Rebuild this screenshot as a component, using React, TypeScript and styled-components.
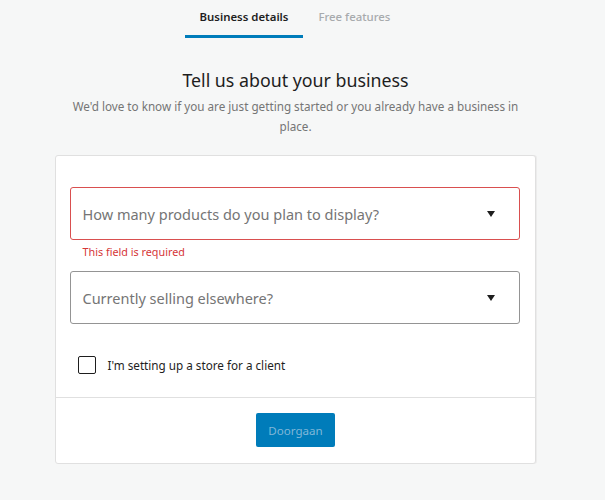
import React from "react"
import styled, { createGlobalStyle } from "styled-components"

const GlobalStyle = createGlobalStyle`
  body {
    margin: 0;
    background: #f6f7f7;
    font-family: "Noto Sans", "Open Sans", sans-serif;
    color: #1e1e1e;
  }
`

const Page = styled.div`
  width: 605px;
  display: flex;
  flex-direction: column;
  align-items: center;
`

const Tabs = styled.nav`
  display: flex;
  justify-content: center;
  margin-left: -15px;
`

const Tab = styled.div<{ $active?: boolean }>`
  padding: 9px 15px 0;
  height: 26px;
  font-size: 11.4px;
  font-weight: ${(p) => (p.$active ? 600 : 500)};
  color: ${(p) => (p.$active ? "#1e1e1e" : "#a7aaad")};
  border-bottom: 3px solid ${(p) => (p.$active ? "#007cba" : "transparent")};
  white-space: nowrap;
`

const Header = styled.header`
  margin-top: 29px;
  margin-left: -14px;
  text-align: center;
  width: 470px;
`

const Title = styled.h1`
  margin: 0;
  font-size: 17.8px;
  font-weight: 400;
  line-height: 26px;
  color: #1e1e1e;
`

const Subtitle = styled.p`
  margin: 3px 0 0;
  font-size: 11.7px;
  line-height: 20px;
  color: #757575;
`

const Card = styled.section`
  margin-top: 19px;
  margin-left: -15px;
  width: 479px;
  background: #fff;
  border: 1px solid #e0e0e0;
  border-radius: 3px;
  box-shadow: 1px 0 0 #ececec;
`

const CardBody = styled.div`
  padding: 31px 15px 23px 14px;
  display: flex;
  flex-direction: column;
`

const Field = styled.div<{ $gap: number }>`
  display: flex;
  flex-direction: column;
  margin-bottom: ${(p) => p.$gap}px;
`

const Select = styled.div<{ $error?: boolean }>`
  height: 51px;
  border: 1px solid ${(p) => (p.$error ? "#d94f4f" : "#949494")};
  border-radius: 3px;
  display: flex;
  align-items: center;
  justify-content: space-between;
  padding: 0 24px 0 12px;
  font-size: 14.5px;
  color: #757575;
`

const Arrow = styled.span`
  width: 0;
  height: 0;
  border-left: 4px solid transparent;
  border-right: 4px solid transparent;
  border-top: 6px solid #1e1e1e;
`

const ErrorText = styled.div`
  margin-top: 5px;
  padding-left: 13px;
  font-size: 10.8px;
  line-height: 14px;
  color: #d63638;
`

const CheckRow = styled.label`
  display: flex;
  align-items: center;
  gap: 12px;
  padding-left: 8px;
  margin-top: 1px;
  font-size: 11.7px;
  color: #1e1e1e;
`

const Box = styled.span`
  width: 18px;
  height: 18px;
  border: 1px solid #1e1e1e;
  border-radius: 2px;
  box-sizing: border-box;
`

const CardFooter = styled.div`
  border-top: 1px solid #e0e0e0;
  display: flex;
  justify-content: center;
  padding: 15px 0 16px;
`

const Button = styled.button`
  height: 34px;
  padding: 0 12px;
  margin-left: 1px;
  background: #007cba;
  border: none;
  border-radius: 2px;
  color: #7fb7d8;
  font-family: inherit;
  font-size: 11.6px;
`

export default function App() {
  return (
    <>
      <GlobalStyle />
      <Page>
        <Tabs>
          <Tab $active>Business details</Tab>
          <Tab>Free features</Tab>
        </Tabs>
        <Header>
          <Title>Tell us about your business</Title>
          <Subtitle>
            We'd love to know if you are just getting started or you already
            have a business in place.
          </Subtitle>
        </Header>
        <Card>
          <CardBody>
            <Field $gap={12}>
              <Select $error>
                How many products do you plan to display?
                <Arrow />
              </Select>
              <ErrorText>This field is required</ErrorText>
            </Field>
            <Field $gap={31}>
              <Select>
                Currently selling elsewhere?
                <Arrow />
              </Select>
            </Field>
            <CheckRow>
              <Box />
              I'm setting up a store for a client
            </CheckRow>
          </CardBody>
          <CardFooter>
            <Button disabled>Doorgaan</Button>
          </CardFooter>
        </Card>
      </Page>
    </>
  )
}
